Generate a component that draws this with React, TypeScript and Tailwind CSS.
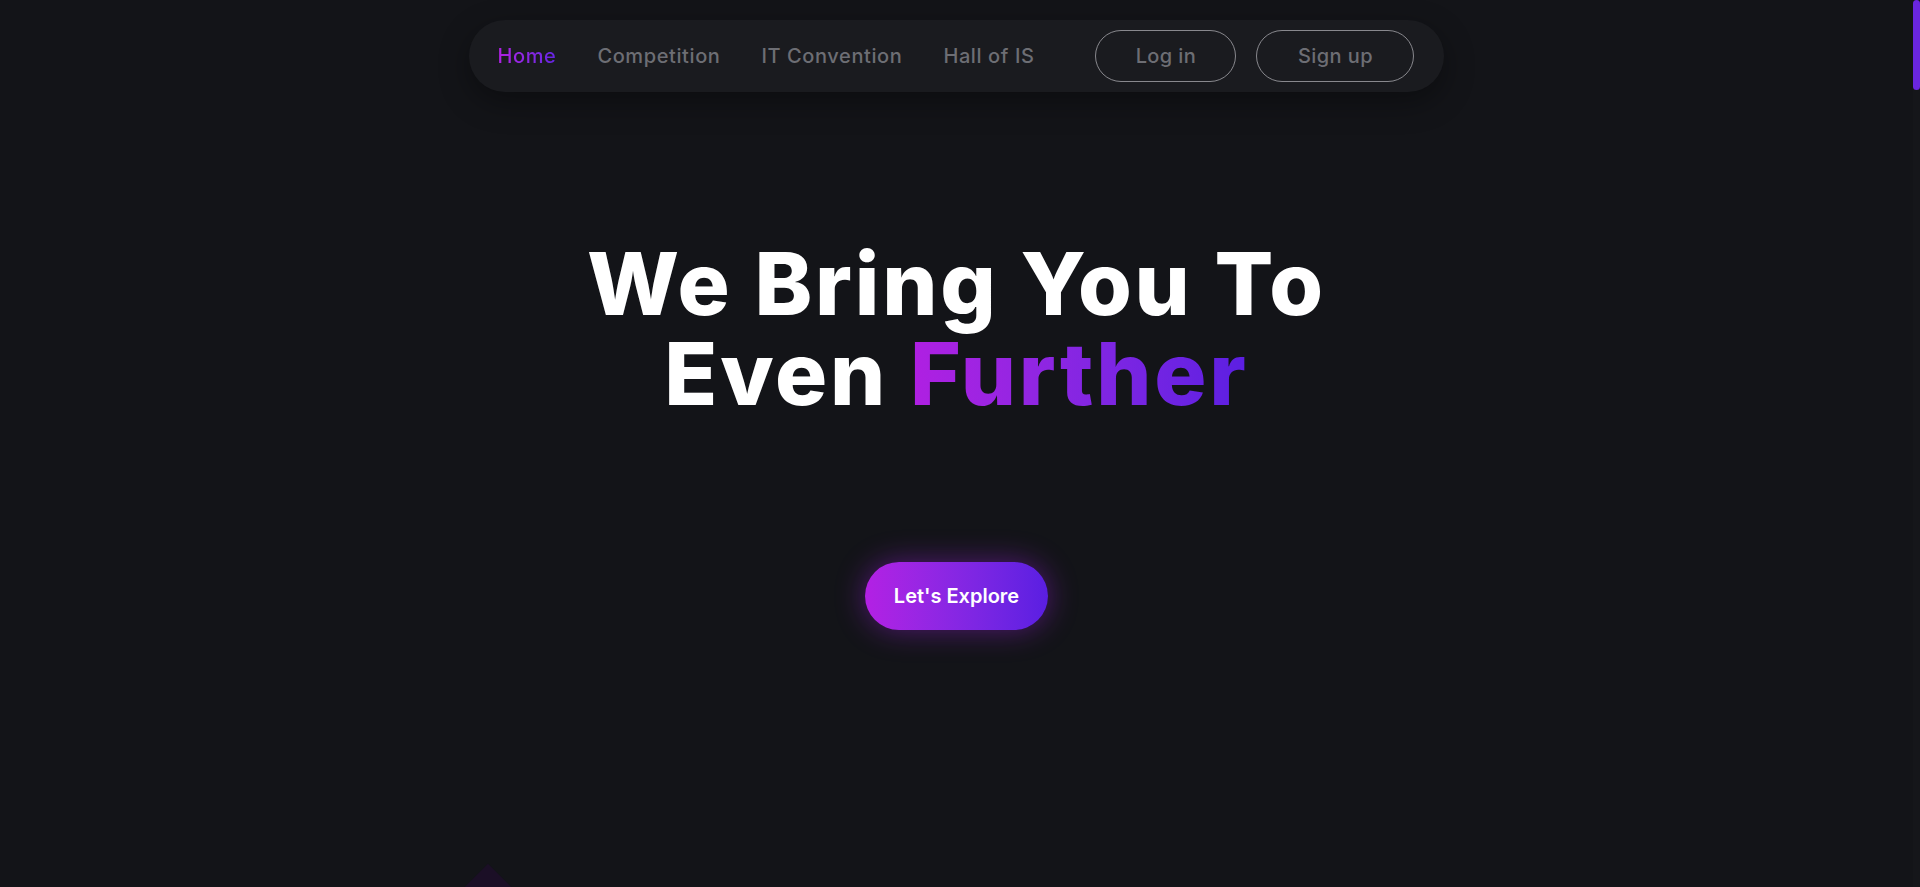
import { useState } from 'react';

const links = ['Home', 'Competition', 'IT Convention', 'Hall of IS'];

export default function App() {
  const [active, setActive] = useState('Home');

  return (
    <div className="flex h-screen overflow-hidden bg-[#131418] [font-family:Inter,'Noto_Sans',sans-serif]">
      <main className="relative flex-1">
        {/* Top nav */}
        <header className="flex justify-center pt-5">
          <nav className="flex h-[72px] items-center rounded-full bg-[#1a1b1f] pl-[29px] pr-[30px] shadow-[0_10px_30px_rgba(0,0,0,0.35)]">
            <ul className="flex items-center gap-[41px]">
              {links.map(l => (
                <li key={l}>
                  <button
                    onClick={() => setActive(l)}
                    className={
                      active === l
                        ? 'bg-gradient-to-r from-[#b01fe2] to-[#6424e2] bg-clip-text text-[20px] font-medium tracking-[0.03em] text-transparent'
                        : 'text-[20px] font-medium tracking-[0.03em] text-[#6d6e74] hover:text-[#9a9ba1]'
                    }
                  >
                    {l}
                  </button>
                </li>
              ))}
            </ul>
            <div className="ml-[61px] flex items-center gap-5">
              <button className="h-[52px] w-[141px] rounded-full border border-[#88888d] text-[20px] font-medium tracking-[0.02em] text-[#6d6e74]">
                Log in
              </button>
              <button className="h-[52px] w-[158px] rounded-full border border-[#88888d] text-[20px] font-medium tracking-[0.02em] text-[#6d6e74]">
                Sign up
              </button>
            </div>
          </nav>
        </header>

        {/* Hero */}
        <section className="flex flex-col items-center pt-[147px]">
          <h1 className="text-center text-[87px] font-extrabold leading-[90px] tracking-[0.032em] text-white">
            <span className="block">We Bring You To</span>
            <span className="block">
              Even{' '}
              <span className="bg-gradient-to-r from-[#b01fe2] to-[#5b1ee2] bg-clip-text text-transparent">Further</span>
            </span>
          </h1>
          <button className="mt-[143px] h-[68px] w-[183px] rounded-full bg-gradient-to-r from-[#b320e4] to-[#5a1ee2] text-[20px] font-semibold text-white shadow-[0_0_30px_rgba(160,32,230,0.45)]">
            Let's Explore
          </button>
        </section>

        {/* faint decorative shape peeking at the bottom */}
        <div className="absolute left-[468px] top-[872px] h-[40px] w-[40px] rotate-45 bg-[#1b0f26]" />
      </main>

      {/* page scrollbar */}
      <aside className="w-[7px] bg-[#15161a]">
        <div className="h-[90px] rounded-full bg-[#6a26e0]" />
      </aside>
    </div>
  );
}
